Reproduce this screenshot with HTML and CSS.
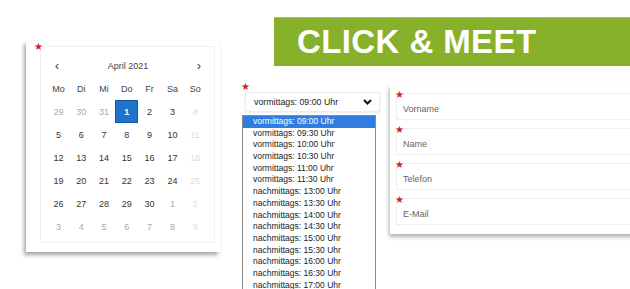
FILE: index.html
```html
<!DOCTYPE html>
<html lang="de">
<head>
    <meta charset="UTF-8">
    <meta name="viewport" content="width=device-width, initial-scale=1.0">
    <title>Click &amp; Meet</title>
    <link rel="stylesheet" href="styles.css">
</head>
<body>
    <div class="page">
        <!-- Kalender -->
        <div class="calendar-card">
            <span class="req req-cal">★</span>
            <div class="calendar">
                <div class="cal-head">
                    <span class="nav">‹</span>
                    <span class="month">April 2021</span>
                    <span class="nav">›</span>
                </div>
                <div class="cal-grid">
                    <span class="wd">Mo</span><span class="wd">Di</span><span class="wd">Mi</span><span class="wd">Do</span><span class="wd">Fr</span><span class="wd">Sa</span><span class="wd">So</span>

                    <span class="other">29</span><span class="other">30</span><span class="other">31</span><span class="sel">1</span><span>2</span><span>3</span><span class="sun">4</span>
                    <span>5</span><span>6</span><span>7</span><span>8</span><span>9</span><span>10</span><span class="sun">11</span>
                    <span>12</span><span>13</span><span>14</span><span>15</span><span>16</span><span>17</span><span class="sun">18</span>
                    <span>19</span><span>20</span><span>21</span><span>22</span><span>23</span><span>24</span><span class="sun">25</span>
                    <span>26</span><span>27</span><span>28</span><span>29</span><span>30</span><span class="other">1</span><span class="sun">2</span>
                    <span class="other">3</span><span class="other">4</span><span class="other">5</span><span class="other">6</span><span class="other">7</span><span class="other">8</span><span class="sun">9</span>
                </div>
            </div>
        </div>

        <!-- Banner -->
        <div class="banner">CLICK &amp; MEET</div>

        <!-- Uhrzeit -->
        <div class="time-col">
            <span class="req req-time">★</span>
            <div class="select-box">
                <span>vormittags: 09:00 Uhr</span>
                <svg width="9" height="6" viewBox="0 0 9 6"><polyline points="1,1 4.5,4.5 8,1" fill="none" stroke="#111" stroke-width="2"/></svg>
            </div>
            <ul class="time-list">
                <li class="active">vormittags: 09:00 Uhr</li>
                <li>vormittags: 09:30 Uhr</li>
                <li>vormittags: 10:00 Uhr</li>
                <li>vormittags: 10:30 Uhr</li>
                <li>vormittags: 11:00 Uhr</li>
                <li>vormittags: 11:30 Uhr</li>
                <li>nachmittags: 13:00 Uhr</li>
                <li>nachmittags: 13:30 Uhr</li>
                <li>nachmittags: 14:00 Uhr</li>
                <li>nachmittags: 14:30 Uhr</li>
                <li>nachmittags: 15:00 Uhr</li>
                <li>nachmittags: 15:30 Uhr</li>
                <li>nachmittags: 16:00 Uhr</li>
                <li>nachmittags: 16:30 Uhr</li>
                <li>nachmittags: 17:00 Uhr</li>
            </ul>
        </div>

        <!-- Kontaktdaten -->
        <div class="fields">
            <div class="field"><span class="req">★</span>Vorname</div>
            <div class="field"><span class="req">★</span>Name</div>
            <div class="field"><span class="req">★</span>Telefon</div>
            <div class="field"><span class="req">★</span>E-Mail</div>
        </div>
    </div>
</body>
</html>
```

FILE: styles.css
```css
body {
    margin: 0;
    background: #fff;
    font-family: "Liberation Sans", Arial, sans-serif;
    color: #333;
    overflow: hidden;
}

.page {
    display: grid;
    grid-template-columns: 216px 148px 1fr;
    grid-template-rows: 66px 1fr;
    padding-left: 26px;
    height: 289px;
    overflow: hidden;
}

.req {
    color: #d0202a;
    font-family: "DejaVu Sans", sans-serif;
    font-size: 10px;
    line-height: 10px;
}

/* Kalender */
.calendar-card {
    grid-column: 1;
    grid-row: 1 / span 2;
    position: relative;
    margin-top: 41px;
    width: 194px;
    height: 211px;
    background: #fff;
    box-shadow: -2px 3px 4px rgba(0, 0, 0, 0.35);
    padding: 5px 5px 9px 14px;
    box-sizing: border-box;
}

.req-cal {
    position: absolute;
    left: 8px;
    top: 1px;
}

.calendar {
    border: 1px solid #f0f0f0;
    height: 100%;
    box-sizing: border-box;
    padding: 7px 0 0 6px;
}

.cal-head {
    display: flex;
    justify-content: space-between;
    align-items: center;
    width: 160px;
    height: 23px;
    padding: 0 6px 0 8px;
    box-sizing: border-box;
    font-size: 9px;
    color: #444;
}

.cal-head .nav {
    font-size: 12px;
    color: #333;
}

.cal-grid {
    display: grid;
    grid-template-columns: repeat(7, 22.8px);
    grid-auto-rows: 23px;
    font-size: 9px;
}

.cal-grid span {
    display: flex;
    align-items: center;
    justify-content: center;
    color: #333;
}

.cal-grid .wd {
    color: #444;
}

.cal-grid .other {
    color: #aaa;
}

.cal-grid .sun {
    color: #ddd;
}

.cal-grid .sel {
    background: #1f74c9;
    border: 1px solid #0f5aa6;
    color: #fff;
    font-weight: bold;
}

/* Banner */
.banner {
    grid-column: 2 / span 2;
    grid-row: 1;
    margin: 17px 0 0 32px;
    height: 49px;
    background: #87b12a;
    border-top: 1px solid #a2c656;
    box-sizing: border-box;
    color: #fff;
    font-weight: bold;
    font-size: 33px;
    letter-spacing: 0.4px;
    line-height: 48px;
    padding-left: 23px;
}

/* Uhrzeit */
.time-col {
    grid-column: 2;
    grid-row: 2;
    position: relative;
    padding-top: 26px;
}

.req-time {
    position: absolute;
    left: -1px;
    top: 16px;
}

.select-box {
    display: flex;
    align-items: center;
    justify-content: space-between;
    margin-left: 3px;
    width: 135px;
    height: 20px;
    padding: 0 7px 0 8px;
    box-sizing: border-box;
    border: 1px solid #ececec;
    box-shadow: 0 1px 2px rgba(0, 0, 0, 0.08);
    font-size: 8.8px;
    color: #222;
}

.time-list {
    list-style: none;
    margin: 3px 0 0;
    padding: 0;
    width: 134px;
    border: 1px solid #8a8a8a;
    border-bottom: none;
    box-sizing: border-box;
    background: #fff;
}

.time-list li {
    height: 11.7px;
    line-height: 11.7px;
    padding-left: 10px;
    font-size: 8.5px;
    color: #222;
}

.time-list li.active {
    background: #2f7de1;
    color: #fff;
}

/* Kontaktdaten */
.fields {
    grid-column: 3;
    grid-row: 2;
    align-self: start;
    margin-top: 19px;
    width: 260px;
    height: 149px;
    padding: 8px 0 0 6px;
    box-sizing: border-box;
    background: #fff;
    box-shadow: -1px 3px 4px rgba(0, 0, 0, 0.3);
}

.field {
    position: relative;
    height: 27px;
    margin-bottom: 8px;
    border: 1px solid #efefef;
    border-right: none;
    box-sizing: border-box;
    padding: 10px 0 0 6px;
    font-size: 9px;
    color: #666;
}

.field .req {
    position: absolute;
    left: -2px;
    top: -4px;
}
```
